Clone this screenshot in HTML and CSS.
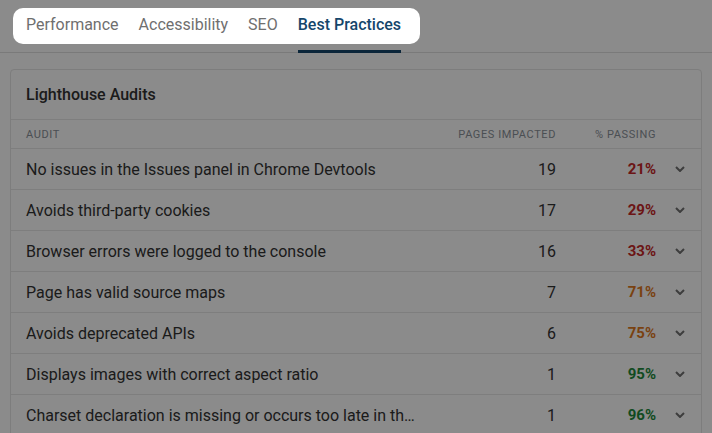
FILE: index.html
```html
<!DOCTYPE html>
<html lang="en">

<head>
    <meta charset="UTF-8">
    <meta name="viewport" content="width=device-width, initial-scale=1.0">
    <title>Lighthouse Audits</title>
    <link rel="stylesheet" href="styles.css">
</head>

<body>
    <nav class="tabs">
        <div class="tab-list">
            <a class="tab">Performance</a>
            <a class="tab">Accessibility</a>
            <a class="tab">SEO</a>
            <a class="tab active">Best Practices</a>
        </div>
    </nav>

    <section class="card">
        <h2 class="card-title">Lighthouse Audits</h2>
        <div class="audits">
            <div class="row head">
                <span>Audit</span>
                <span class="num">Pages Impacted</span>
                <span class="num">% Passing</span>
                <span></span>
            </div>
            <div class="row">
                <span class="name">No issues in the Issues panel in Chrome Devtools</span>
                <span class="num">19</span>
                <span class="num pass bad">21%</span>
                <span class="more"><svg viewBox="0 0 10 6"><polyline points="1,1 5,5 9,1"/></svg></span>
            </div>
            <div class="row">
                <span class="name">Avoids third-party cookies</span>
                <span class="num">17</span>
                <span class="num pass bad">29%</span>
                <span class="more"><svg viewBox="0 0 10 6"><polyline points="1,1 5,5 9,1"/></svg></span>
            </div>
            <div class="row">
                <span class="name">Browser errors were logged to the console</span>
                <span class="num">16</span>
                <span class="num pass bad">33%</span>
                <span class="more"><svg viewBox="0 0 10 6"><polyline points="1,1 5,5 9,1"/></svg></span>
            </div>
            <div class="row">
                <span class="name">Page has valid source maps</span>
                <span class="num">7</span>
                <span class="num pass warn">71%</span>
                <span class="more"><svg viewBox="0 0 10 6"><polyline points="1,1 5,5 9,1"/></svg></span>
            </div>
            <div class="row">
                <span class="name">Avoids deprecated APIs</span>
                <span class="num">6</span>
                <span class="num pass warn">75%</span>
                <span class="more"><svg viewBox="0 0 10 6"><polyline points="1,1 5,5 9,1"/></svg></span>
            </div>
            <div class="row">
                <span class="name">Displays images with correct aspect ratio</span>
                <span class="num">1</span>
                <span class="num pass good">95%</span>
                <span class="more"><svg viewBox="0 0 10 6"><polyline points="1,1 5,5 9,1"/></svg></span>
            </div>
            <div class="row">
                <span class="name">Charset declaration is missing or occurs too late in the HTML</span>
                <span class="num">1</span>
                <span class="num pass good">96%</span>
                <span class="more"><svg viewBox="0 0 10 6"><polyline points="1,1 5,5 9,1"/></svg></span>
            </div>
        </div>
    </section>
</body>

</html>
```

FILE: styles.css
```css
body {
    margin: 0px;
    background: #ffffff;
    font-family: Roboto, "Liberation Sans", sans-serif;
    color: #333333;
    overflow: hidden;
}

.tabs {
    height: 52px;
    border-bottom: 1px solid #e0e0e0;
    padding-left: 16px;
    display: flex;
}

.tab-list {
    position: relative;
    display: flex;
}

/* tour spotlight: dims everything except the tab list */
.tab-list::before {
    content: "";
    position: absolute;
    top: 8px;
    bottom: 8px;
    left: -3px;
    right: -9px;
    border-radius: 10px;
    box-shadow: 0 0 0 2000px rgba(0, 0, 0, 0.455);
    z-index: 10;
    pointer-events: none;
}

.tab {
    display: flex;
    align-items: center;
    margin: 0 10px -1px;
    padding-bottom: 1px;
    font-size: 16px;
    color: #6f6f6f;
    border-bottom: 3px solid transparent;
    box-sizing: border-box;
}

.tab.active {
    color: #15466b;
    font-weight: 500;
    border-bottom-color: #15466b;
}

.card {
    margin: 16px 10px 0;
    border: 1px solid #e5e5e5;
    border-radius: 4px;
}

.card-title {
    margin: 0px;
    height: 49px;
    padding-left: 15px;
    display: flex;
    align-items: center;
    font-size: 16px;
    font-weight: 500;
    border-bottom: 1px solid #e8e8e8;
}

.row {
    display: grid;
    grid-template-columns: 1fr 120px 100px 45px;
    align-items: center;
    height: 40px;
    border-bottom: 1px solid #e8e8e8;
    font-size: 16px;
}

.row > span:first-child {
    padding: 0 20px 0 15px;
}

.row.head {
    height: 28px;
    font-size: 11px;
    letter-spacing: 0.6px;
    text-transform: uppercase;
    color: #8a9199;
}

.name {
    white-space: nowrap;
    overflow: hidden;
    text-overflow: ellipsis;
}

.num {
    text-align: right;
}

.pass {
    font-weight: 700;
    font-size: 15px;
}

.pass.bad {
    color: #c62828;
}

.pass.warn {
    color: #e07a1f;
}

.pass.good {
    color: #1e8a3c;
}

.more {
    display: flex;
    padding-left: 19px;
}

.more svg {
    width: 10px;
    height: 6px;
    fill: none;
    stroke: #707070;
    stroke-width: 2;
}
```
